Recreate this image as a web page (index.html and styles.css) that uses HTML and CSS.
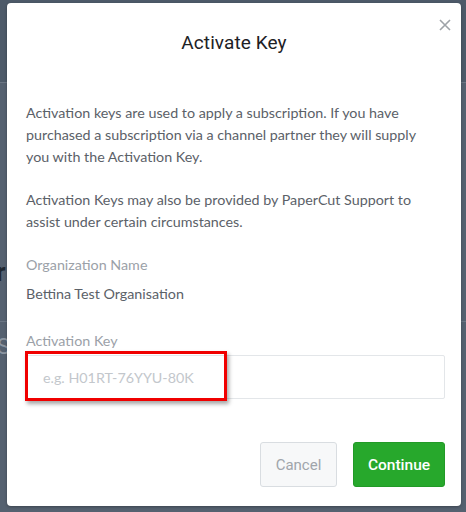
FILE: index.html
```html
<!DOCTYPE html>
<html>
<head>
<meta charset="utf-8">
<link rel="stylesheet" href="styles.css">
</head>
<body>
<div class="page">
  <div class="page-header"></div>
  <div class="page-body">
    <div class="page-title">r</div>
    <div class="page-sub">S</div>
  </div>
</div>
<div class="modal">
  <div class="modal-header">
    <h2 class="modal-title">Activate Key</h2>
    <button class="close" aria-label="Close">
      <svg width="12" height="12" viewBox="0 0 12 12"><path d="M1 1L11 11M11 1L1 11" stroke="#9ea3a8" stroke-width="1.6" fill="none"/></svg>
    </button>
  </div>
  <div class="modal-body">
    <p class="text">Activation keys are used to apply a subscription. If you have purchased a subscription via a channel partner they will supply you with the Activation Key.</p>
    <p class="text">Activation Keys may also be provided by PaperCut Support to assist under certain circumstances.</p>
    <div class="field">
      <div class="label">Organization Name</div>
      <div class="value">Bettina Test Organisation</div>
    </div>
    <div class="field">
      <div class="label">Activation Key</div>
      <div class="input-wrap">
        <input class="input" type="text" placeholder="e.g. H01RT-76YYU-80K">
        <div class="highlight"></div>
      </div>
    </div>
  </div>
  <div class="modal-footer">
    <button class="btn btn-cancel">Cancel</button>
    <button class="btn btn-primary">Continue</button>
  </div>
</div>
</body>
</html>
```

FILE: styles.css
```css
html, body {
  margin: 0;
  padding: 0;
  width: 466px;
  height: 512px;
  overflow: hidden;
  background: #535f6d;
  font-family: "Source Sans Pro", Lato, "Open Sans", sans-serif;
}
.page {
  height: 512px;
  display: flex;
  flex-direction: column;
}
.page-header {
  height: 82px;
  background: #4d5a69;
  border-bottom: 1px solid #6b7684;
}
.page-body {
  flex: 1;
  background: #556170;
  padding-top: 174px;
}
.page-title {
  font-family: Roboto, sans-serif;
  font-weight: 700;
  font-size: 26px;
  color: #1f2731;
  line-height: 30px;
  margin-left: -4px;
  padding-bottom: 34px;
  border-bottom: 1px solid #6b7684;
}
.page-sub {
  margin-top: 12px;
  font-family: Roboto, sans-serif;
  font-size: 22px;
  line-height: 26px;
  color: #8c96a2;
  margin-left: -3px;
}
.modal {
  position: absolute;
  left: 7px;
  top: 3px;
  width: 454px;
  height: 503px;
  background: #fff;
  border-radius: 4px;
  box-shadow: 0 1px 3px rgba(0,0,0,0.3);
  box-sizing: border-box;
  display: flex;
  flex-direction: column;
}
.modal-header {
  position: relative;
  padding-top: 28px;
  text-align: center;
}
.modal-title {
  margin: 0;
  font-family: Roboto, sans-serif;
  font-weight: 400;
  font-size: 19px;
  line-height: 24px;
  color: #1d2125;
  letter-spacing: 0.1px;
}
.close {
  position: absolute;
  right: 7px;
  top: 13px;
  width: 18px;
  height: 18px;
  border: 0;
  padding: 0;
  background: transparent;
  display: flex;
  align-items: center;
  justify-content: center;
}
.modal-body {
  padding: 47px 16px 0 19px;
}
.text {
  margin: 0 8px 21px 0;
  font-size: 14.3px;
  line-height: 22px;
  color: #5b6168;
}
.label {
  font-size: 14.3px;
  line-height: 22px;
  color: #9ba1a8;
  margin-top: 25px;
}
.field:first-of-type .label { margin-top: 0; }
.value {
  font-size: 14.3px;
  line-height: 22px;
  color: #5b6168;
  margin-top: 7px;
}
.input-wrap {
  position: relative;
  margin-top: 3px;
}
.input {
  display: block;
  width: 100%;
  height: 44px;
  box-sizing: border-box;
  border: 1px solid #e3e6e9;
  border-radius: 2px;
  padding: 0 16px;
  font-family: inherit;
  font-size: 14.3px;
  color: #333;
  background: #fff;
  outline: none;
}
.input::placeholder { color: #c3c7cc; }
.highlight {
  position: absolute;
  left: -1px;
  top: -4px;
  width: 202px;
  height: 50px;
  box-sizing: border-box;
  border: 3px solid #f00000;
  box-shadow: 2px 3px 4px rgba(0,0,0,0.35);
}
.modal-footer {
  margin-top: auto;
  display: flex;
  justify-content: flex-end;
  gap: 16px;
  padding: 0 16px 19px 0;
}
.btn {
  height: 45px;
  border-radius: 3px;
  font-size: 15px;
  font-family: Roboto, sans-serif;
  padding: 0;
  cursor: pointer;
}
.btn-cancel {
  width: 77px;
  background: #f7f8f9;
  border: 1px solid #d9dde1;
  color: #a0a5ab;
}
.btn-primary {
  width: 92px;
  background: #27a82c;
  border: 1px solid #229a27;
  color: #fff;
  font-weight: 500;
  font-size: 15.5px;
}
```
